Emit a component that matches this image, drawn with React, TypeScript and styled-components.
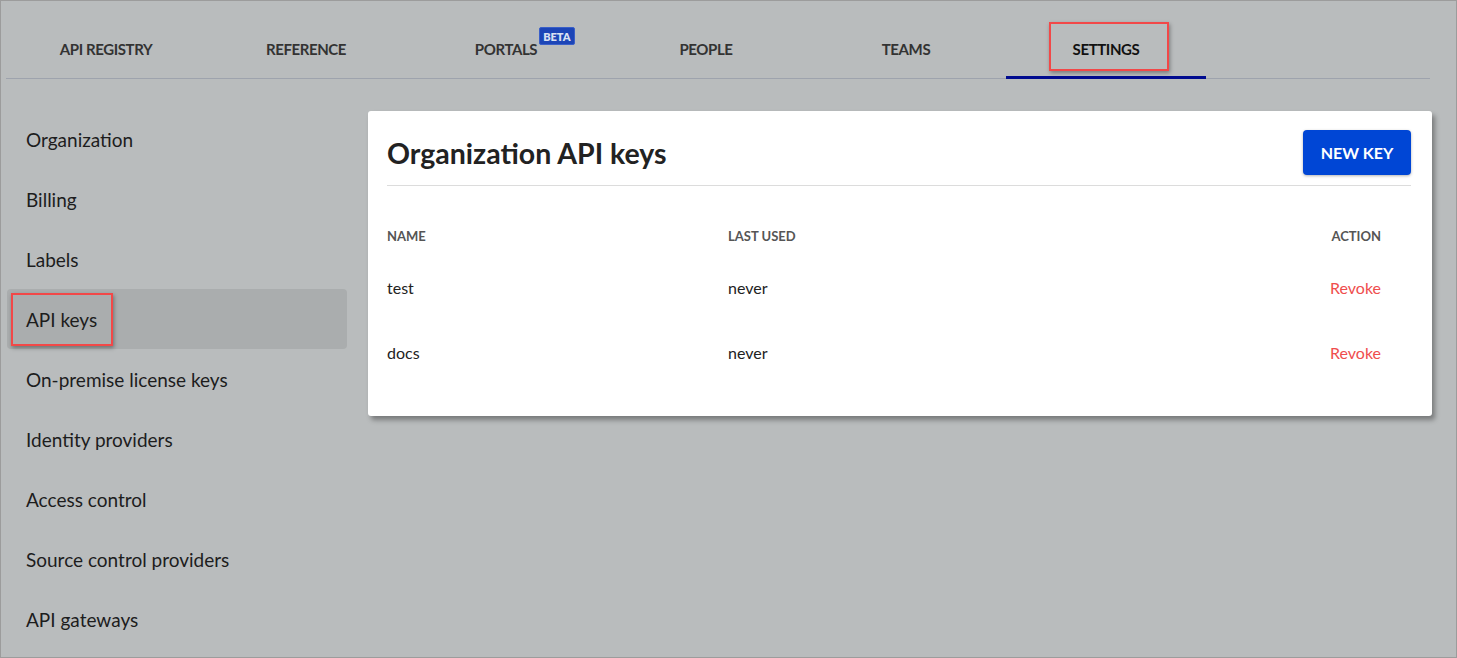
import React from "react";
import styled, { createGlobalStyle } from "styled-components";

const Global = createGlobalStyle`
  html, body { margin: 0; padding: 0; }
  body {
    font-family: "Lato", "Noto Sans", "Liberation Sans", sans-serif;
    background: #b9bcbd;
    color: #1f1f1f;
  }
  * { box-sizing: border-box; }
`;

const Frame = styled.div`
  width: 1457px;
  height: 658px;
  border: 1px solid #9c9c9c;
  background: #b9bcbd;
  overflow: hidden;
`;

const TabBar = styled.nav`
  display: flex;
  margin: 0 26px 0 5px;
  height: 78px;
  border-bottom: 1px solid #9ea3ad;
`;

const Tab = styled.div<{ $active?: boolean }>`
  width: 200px;
  display: flex;
  align-items: center;
  justify-content: center;
  padding-top: 21px;
  font-size: 15px;
  font-weight: 700;
  letter-spacing: -0.4px;
  color: ${(p) => (p.$active ? "#111" : "#333")};
  border-bottom: 3px solid ${(p) => (p.$active ? "#000b8f" : "transparent")};
  margin-bottom: -1px;
`;

const TabLabel = styled.span`
  position: relative;
`;

const Beta = styled.span`
  position: absolute;
  left: 100%;
  top: -13px;
  margin-left: 2px;
  background: #1c45b7;
  color: #d9e0f2;
  font-size: 11px;
  font-weight: 800;
  letter-spacing: 0;
  line-height: 15px;
  padding: 1px 3px 0;
  border-radius: 2px;
  border: 1px solid #3a5fc8;
`;

const Highlight = styled.span<{ $t: number; $r: number; $b: number; $l: number }>`
  position: absolute;
  top: ${(p) => p.$t}px;
  right: ${(p) => p.$r}px;
  bottom: ${(p) => p.$b}px;
  left: ${(p) => p.$l}px;
  border: 2px solid #f24848;
  box-shadow: 1px 2px 4px rgba(0, 0, 0, 0.35);
  pointer-events: none;
`;

const Body = styled.div`
  display: flex;
  align-items: flex-start;
  gap: 21px;
  padding: 30px 0 0 6px;
`;

const Sidebar = styled.ul`
  list-style: none;
  margin: 0;
  padding: 0;
  width: 340px;
  flex: none;
`;

const SideItem = styled.li<{ $active?: boolean }>`
  height: 60px;
  display: flex;
  align-items: center;
  padding-left: 19px;
  font-size: 19px;
  color: #1d1d1d;
  border-radius: 4px;
  background: ${(p) => (p.$active ? "#aaadae" : "transparent")};
`;

const SideLabel = styled.span`
  position: relative;
`;

const Card = styled.section`
  width: 1064px;
  margin-top: 2px;
  background: #fff;
  border-radius: 3px;
  box-shadow: 3px 4px 5px rgba(0, 0, 0, 0.35);
  padding: 19px 21px 30px 19px;
`;

const CardHeader = styled.div`
  display: flex;
  align-items: center;
  justify-content: space-between;
  padding-bottom: 10px;
  border-bottom: 1px solid #dcdcdc;
`;

const Title = styled.h1`
  margin: 0;
  font-size: 28.5px;
  font-weight: 700;
  color: #222;
`;

const Button = styled.button`
  width: 108px;
  height: 45px;
  border: none;
  border-radius: 4px;
  background: #0046d5;
  color: #fff;
  font-family: inherit;
  font-size: 16px;
  font-weight: 700;
  box-shadow: 0 1px 3px rgba(0, 0, 0, 0.3);
`;

const Table = styled.div`
  margin-top: 30px;
  padding-right: 30px;
`;

const Row = styled.div<{ $head?: boolean }>`
  display: grid;
  grid-template-columns: 341px 1fr 200px;
  align-items: center;
  height: ${(p) => (p.$head ? 40 : 65)}px;
  padding-bottom: ${(p) => (p.$head ? 0 : 3)}px;
  font-size: ${(p) => (p.$head ? 13 : 16)}px;
  font-weight: ${(p) => (p.$head ? 700 : 400)};
  color: ${(p) => (p.$head ? "#555" : "#222")};
`;

const ActionCell = styled.div<{ $link?: boolean }>`
  text-align: right;
  color: ${(p) => (p.$link ? "#ef4d4d" : "inherit")};
`;

const tabs = ["API REGISTRY", "REFERENCE", "PORTALS", "PEOPLE", "TEAMS", "SETTINGS"];
const side = [
  "Organization",
  "Billing",
  "Labels",
  "API keys",
  "On-premise license keys",
  "Identity providers",
  "Access control",
  "Source control providers",
  "API gateways",
];
const keys = [
  { name: "test", used: "never" },
  { name: "docs", used: "never" },
];

export default function App() {
  return (
    <>
      <Global />
      <Frame>
        <TabBar>
          {tabs.map((t) => (
            <Tab key={t} $active={t === "SETTINGS"}>
              <TabLabel>
                {t}
                {t === "PORTALS" && <Beta>BETA</Beta>}
                {t === "SETTINGS" && <Highlight $t={-18} $r={-30} $b={-13} $l={-24} />}
              </TabLabel>
            </Tab>
          ))}
        </TabBar>
        <Body>
          <Sidebar>
            {side.map((s) => (
              <SideItem key={s} $active={s === "API keys"}>
                <SideLabel>
                  {s}
                  {s === "API keys" && <Highlight $t={-15} $r={-16} $b={-15} $l={-15} />}
                </SideLabel>
              </SideItem>
            ))}
          </Sidebar>
          <Card>
            <CardHeader>
              <Title>Organization API keys</Title>
              <Button>NEW KEY</Button>
            </CardHeader>
            <Table>
              <Row $head>
                <div>NAME</div>
                <div>LAST USED</div>
                <ActionCell>ACTION</ActionCell>
              </Row>
              {keys.map((k) => (
                <Row key={k.name}>
                  <div>{k.name}</div>
                  <div>{k.used}</div>
                  <ActionCell $link>Revoke</ActionCell>
                </Row>
              ))}
            </Table>
          </Card>
        </Body>
      </Frame>
    </>
  );
}
